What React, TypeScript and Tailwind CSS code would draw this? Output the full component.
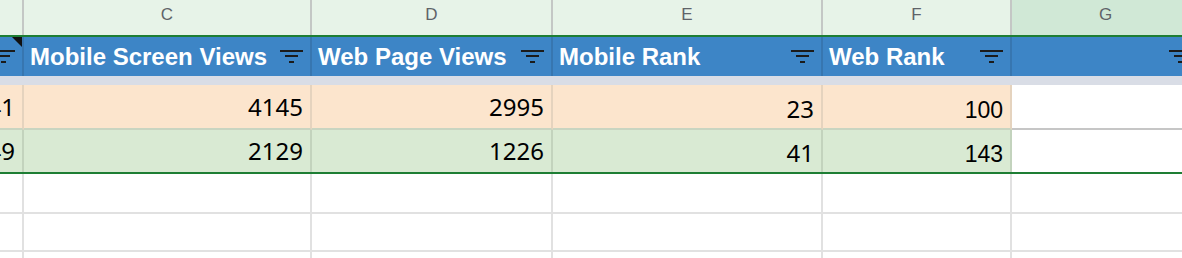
const cols = [
  { key: "B", w: "w-[24px]", head: "", title: "", r1: "41", r2: "49", sel: false },
  { key: "C", w: "w-[288px]", head: "C", title: "Mobile Screen Views", r1: "4145", r2: "2129", sel: false },
  { key: "D", w: "w-[241px]", head: "D", title: "Web Page Views", r1: "2995", r2: "1226", sel: false },
  { key: "E", w: "w-[270px]", head: "E", title: "Mobile Rank", r1: "23", r2: "41", sel: false },
  { key: "F", w: "w-[189px]", head: "F", title: "Web Rank", r1: "100", r2: "143", sel: false },
  { key: "G", w: "w-[189px]", head: "G", title: "", r1: "", r2: "", sel: true },
];

function FilterIcon() {
  return (
    <svg width="23" height="14" viewBox="0 0 23 14" className="shrink-0">
      <rect x="0" y="0" width="23" height="2" fill="#1b1b1b" />
      <rect x="5" y="5" width="13" height="2" fill="#1b1b1b" />
      <rect x="9" y="11" width="5" height="2" fill="#1b1b1b" />
    </svg>
  );
}

function NumCell({ col, value, row }: { col: (typeof cols)[number]; value: string; row: 1 | 2 }) {
  if (col.key === "G") {
    return (
      <div
        className={`${col.w} shrink-0 bg-white ${row === 1 ? "border-b-2 border-[#c6c6c6]" : ""}`}
      />
    );
  }
  const arial = col.key === "F";
  const bg = row === 1 ? "bg-[#fce5cd] border-r-[#e5d3be]" : "bg-[#d9ead3] border-r-[#c3d3bd]";
  const pad = arial ? "pb-[6px]" : col.key === "E" ? "pb-[7px]" : "pb-[9px]";
  return (
    <div
      className={`${col.w} shrink-0 border-r-2 ${bg} flex items-end justify-end overflow-hidden pr-[7px] ${pad} ${
        row === 1 ? "border-b-2 border-b-[#c9d5c1]" : ""
      }`}
    >
      <span
        className={`whitespace-nowrap text-black leading-none ${
          arial
            ? "text-[23px] font-['Liberation_Sans',Arial,sans-serif]"
            : "text-[24px] font-['Noto_Sans',sans-serif]"
        }`}
      >
        {value}
      </span>
    </div>
  );
}

export default function App() {
  return (
    <div className="w-[1182px] h-[258px] overflow-hidden bg-white font-['Liberation_Sans',Arial,sans-serif]">
      {/* column letters */}
      <div className="flex h-[37px] border-b-2 border-[#1e7e34]">
        {cols.map((c) => (
          <div
            key={c.key}
            className={`${c.w} shrink-0 border-r-2 border-[#c4c7c5] flex justify-center pt-[2px] leading-[25px] text-[17px] text-[#5f6368] ${
              c.sel ? "bg-[#d0e8d6]" : "bg-[#e7f3e8]"
            }`}
          >
            {c.head}
          </div>
        ))}
      </div>

      {/* table header */}
      <div className="flex h-[39px] bg-[#3d85c6]">
        {cols.map((c) => (
          <div
            key={c.key}
            className={`${c.w} relative shrink-0 overflow-hidden border-r-2 border-[#3776b0] flex items-center justify-end gap-2 pl-[6px] pr-[7px]`}
          >
            {c.title && (
              <span className="mr-auto whitespace-nowrap text-white font-bold text-[24px] leading-none">
                {c.title}
              </span>
            )}
            <div className="shrink-0 pt-[1px]">
              <FilterIcon />
            </div>
            {c.key === "B" && (
              <svg width="10" height="10" viewBox="0 0 10 10" className="absolute right-0 top-0">
                <polygon points="0,0 10,0 10,10" fill="#111" />
              </svg>
            )}
          </div>
        ))}
      </div>

      {/* frozen separator */}
      <div className="h-[9px] bg-[#d9dde6]" />

      <div className="flex h-[45px]">
        {cols.map((c) => (
          <NumCell key={c.key} col={c} value={c.r1} row={1} />
        ))}
      </div>
      <div className="flex h-[44px] border-b-2 border-[#1e7e34]">
        {cols.map((c) => (
          <NumCell key={c.key} col={c} value={c.r2} row={2} />
        ))}
      </div>

      {["h-[40px]", "h-[38px]", "h-[38px]"].map((h, i) => (
        <div key={i} className={`flex ${h} border-b-2 border-[#e1e1e1]`}>
          {cols.map((c) => (
            <div key={c.key} className={`${c.w} shrink-0 border-r-2 border-[#e1e1e1]`} />
          ))}
        </div>
      ))}
    </div>
  );
}
